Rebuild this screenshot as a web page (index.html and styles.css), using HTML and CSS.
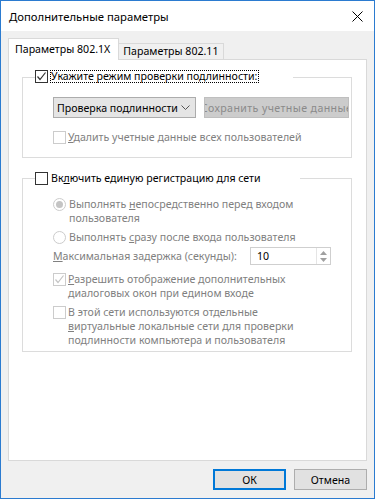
FILE: index.html
```html
<!DOCTYPE html>
<html lang="ru">
<head>
    <meta charset="UTF-8">
    <title>Дополнительные параметры</title>
    <link rel="stylesheet" href="styles.css">
</head>
<body>
    <div class="window">
        <div class="titlebar">
            <span class="title">Дополнительные параметры</span>
            <svg class="close" width="11" height="11" viewBox="0 0 11 11"><path d="M0.5 0.5L10.5 10.5M10.5 0.5L0.5 10.5" stroke="#000" stroke-width="1"/></svg>
        </div>

        <div class="client">
            <div class="tabs">
                <div class="tab active">Параметры 802.1X</div>
                <div class="tab">Параметры 802.11</div>
            </div>

            <div class="panel">
                <fieldset class="group auth">
                    <legend>
                        <span class="check">
                            <span class="box"><svg width="11" height="11" viewBox="0 0 11 11"><path d="M1.5 5.5L4 8.5L9.5 1.5" fill="none" stroke="#333" stroke-width="1.2"/></svg></span>
                            <span class="focus">Укажите режим проверки подлинности:</span>
                        </span>
                    </legend>
                    <div class="content">
                        <div class="row">
                            <div class="combo">
                                <span>Проверка подлинности</span>
                                <svg width="9" height="6" viewBox="0 0 9 6"><path d="M0.5 0.5L4.5 4.5L8.5 0.5" fill="none" stroke="#555" stroke-width="1"/></svg>
                            </div>
                            <div class="btn disabled"><span>Сохранить учетные <u>д</u>анные</span></div>
                        </div>
                        <div class="check dis delete">
                            <span class="box"></span>
                            <span><u>У</u>далить учетные данные всех пользователей</span>
                        </div>
                    </div>
                </fieldset>

                <fieldset class="group sso">
                    <legend>
                        <span class="check">
                            <span class="box"></span>
                            <span class="lbl">Вк<u>л</u>ючить единую регистрацию для сети</span>
                        </span>
                    </legend>
                    <div class="content">
                        <div class="check dis radio-before">
                            <span class="radio on"></span>
                            <span>Выполнять <u>н</u>епосредственно перед входом<br>пользователя</span>
                        </div>
                        <div class="check dis radio-after">
                            <span class="radio"></span>
                            <span>Выполнять <u>с</u>разу после входа пользователя</span>
                        </div>
                        <div class="delay">
                            <span class="dis-text"><u>М</u>аксимальная задержка (секунды):</span>
                            <div class="spin">
                                <span class="value">10</span>
                                <span class="arrows">
                                    <svg width="7" height="4" viewBox="0 0 7 4"><path d="M0 4L3.5 0L7 4Z" fill="#a0a0a0"/></svg>
                                    <svg width="7" height="4" viewBox="0 0 7 4"><path d="M0 0L3.5 4L7 0Z" fill="#a0a0a0"/></svg>
                                </span>
                            </div>
                        </div>
                        <div class="check dis allow">
                            <span class="box"><svg width="11" height="11" viewBox="0 0 11 11"><path d="M1.5 5.5L4 8.5L9.5 1.5" fill="none" stroke="#c4c4c4" stroke-width="1.2"/></svg></span>
                            <span><u>Р</u>азрешить отображение дополнительных<br>диалоговых окон при едином входе</span>
                        </div>
                        <div class="check dis vlan">
                            <span class="box"></span>
                            <span>В этой сети используются отдельные<br><u>в</u>иртуальные локальные сети для проверки<br>подлинности компьютера и пользователя</span>
                        </div>
                    </div>
                </fieldset>
            </div>

            <div class="buttons">
                <button class="ok">ОК</button>
                <button>Отмена</button>
            </div>
        </div>
    </div>
</body>
</html>
```

FILE: styles.css
```css
body {
    margin: 0;
    background: #ffffff;
    font-family: 'Noto Sans', sans-serif;
    font-size: 10.6px;
    color: #000;
}
.window {
    width: 375px;
    height: 499px;
    box-sizing: border-box;
    border: 1px solid #2b7bd0;
    display: flex;
    flex-direction: column;
    background: #f0f0f0;
}
.titlebar {
    height: 30px;
    background: #fff;
    display: flex;
    align-items: center;
    padding-left: 8px;
    flex-shrink: 0;
}
.title {
    font-size: 11.3px;
}
.close {
    margin-left: auto;
    margin-right: 11px;
}
.client {
    flex: 1;
    display: flex;
    flex-direction: column;
    padding: 7px 7px 0 7px;
}
.tabs {
    display: flex;
    align-items: flex-end;
    margin-bottom: -1px;
    height: 22px;
    position: relative;
    z-index: 1;
}
.tab {
    height: 16px;
    line-height: 15px;
    box-sizing: border-box;
    border: 1px solid #d9d9d9;
    border-left: none;
    border-bottom: none;
    background: #f0f0f0;
    padding: 0 5px 0 4px;
    margin-bottom: 1px;
}
.tab.active {
    height: 22px;
    line-height: 20px;
    background: #fff;
    border-left: 1px solid #d9d9d9;
    padding: 0 8px 0 6px;
    margin-bottom: 0;
}
.panel {
    flex: 1;
    background: #fff;
    border: 1px solid #d9d9d9;
    padding: 10px 14px 0 13px;
}
.group {
    margin: 0;
    padding: 0;
    border: 1px solid #dcdcdc;
    min-width: 0;
}
.group legend {
    padding: 0;
    margin-left: 12px;
    height: 15px;
}
.group.sso {
    margin-top: 13px;
}
.auth legend {
    padding-right: 34px;
}
.sso legend {
    padding-right: 39px;
}
.content {
    padding: 12px 0 13px 30px;
}
.sso .content {
    padding: 11px 0 4px 30px;
}
.check {
    display: flex;
    align-items: flex-start;
    line-height: 15px;
    white-space: nowrap;
}
legend .check {
    align-items: center;
}
.box {
    width: 13px;
    height: 13px;
    box-sizing: border-box;
    border: 1px solid #333;
    background: #fff;
    margin-right: 2px;
    margin-top: 1px;
    flex-shrink: 0;
    display: flex;
    align-items: center;
    justify-content: center;
}
legend .box {
    margin-top: 0;
}
.focus {
    border: 1px dotted #000;
    line-height: 11px;
    padding: 0 1px 0 0;
}
.lbl {
    padding-left: 1px;
}
.row {
    display: flex;
    gap: 8px;
}
.combo {
    width: 143px;
    height: 21px;
    box-sizing: border-box;
    border: 1px solid #acacac;
    background: #e5e5e5;
    display: flex;
    align-items: center;
    padding: 0 5px 0 3px;
    justify-content: space-between;
    white-space: nowrap;
}
.btn {
    width: 145px;
    height: 21px;
    box-sizing: border-box;
    border: 1px solid #bfbfbf;
    display: flex;
    align-items: center;
    justify-content: center;
    overflow: hidden;
    white-space: nowrap;
}
.btn.disabled {
    background: #cccccc;
    color: #8a8a8a;
    letter-spacing: 0.4px;
}
.dis, .dis-text {
    color: #808080;
}
.dis .box {
    border-color: #cccccc;
}
.delete {
    margin-top: 12px;
}
.radio {
    width: 13px;
    height: 13px;
    box-sizing: border-box;
    border: 1px solid #cccccc;
    border-radius: 50%;
    margin: 1px 3px 0 0;
    flex-shrink: 0;
    display: flex;
    align-items: center;
    justify-content: center;
}
.radio.on::after {
    content: "";
    width: 7px;
    height: 7px;
    border-radius: 50%;
    background: #c4c4c4;
}
.check.dis {
    line-height: 14px;
}
.radio-after {
    margin-top: 5px;
}
.delay {
    display: flex;
    align-items: center;
    margin-top: 3px;
    white-space: nowrap;
}
.spin {
    margin-left: auto;
    margin-right: 20px;
    width: 81px;
    height: 18px;
    box-sizing: border-box;
    border: 1px solid #cfcfcf;
    display: flex;
    align-items: center;
    padding-left: 6px;
}
.spin .value {
    color: #000;
    flex: 1;
}
.arrows {
    display: flex;
    flex-direction: column;
    gap: 3px;
    padding: 0 3px;
    height: 100%;
    justify-content: center;
    border-left: 1px solid #e5e5e5;
}
.allow {
    margin-top: 7px;
}
.vlan {
    margin-top: 5px;
}
.buttons {
    height: 37px;
    display: flex;
    justify-content: flex-end;
    align-items: flex-start;
    gap: 8px;
    padding-top: 8px;
    box-sizing: border-box;
}
.buttons button {
    width: 73px;
    height: 21px;
    font-family: 'Noto Sans', sans-serif;
    font-size: 10.6px;
    background: #e1e1e1;
    border: 1px solid #adadad;
    padding: 0;
    color: #000;
}
.buttons button.ok {
    border: 2px solid #0078d7;
}
```
